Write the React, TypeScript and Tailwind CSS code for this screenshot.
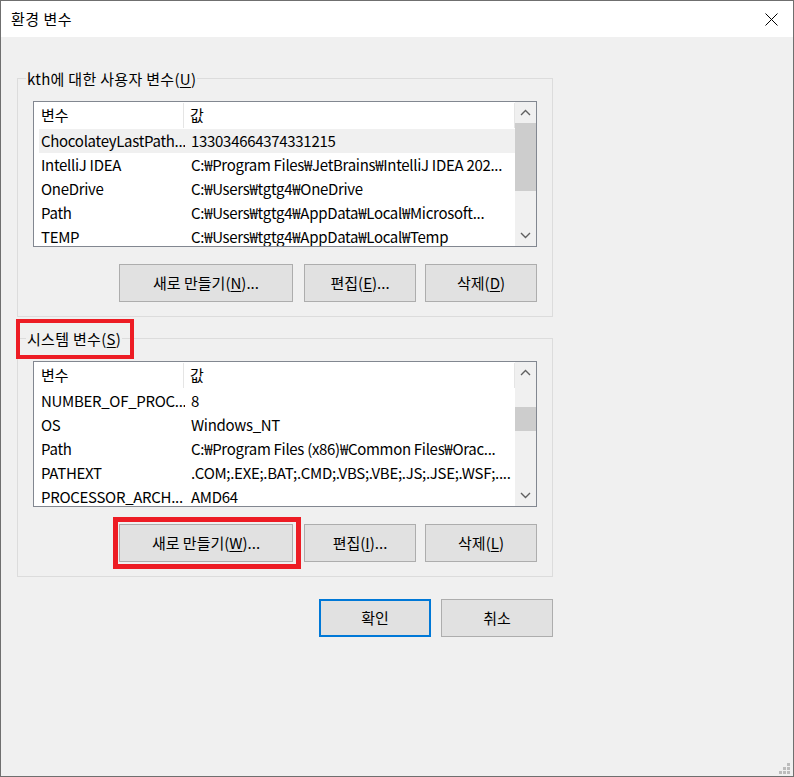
import type { ReactNode } from "react";

type Row = [string, string];

const userRows: Row[] = [
  ["ChocolateyLastPath...", "133034664374331215"],
  ["IntelliJ IDEA", "C:₩Program Files₩JetBrains₩IntelliJ IDEA 202..."],
  ["OneDrive", "C:₩Users₩tgtg4₩OneDrive"],
  ["Path", "C:₩Users₩tgtg4₩AppData₩Local₩Microsoft..."],
  ["TEMP", "C:₩Users₩tgtg4₩AppData₩Local₩Temp"],
];

const systemRows: Row[] = [
  ["NUMBER_OF_PROC...", "8"],
  ["OS", "Windows_NT"],
  ["Path", "C:₩Program Files (x86)₩Common Files₩Orac..."],
  ["PATHEXT", ".COM;.EXE;.BAT;.CMD;.VBS;.VBE;.JS;.JSE;.WSF;...."],
  ["PROCESSOR_ARCH...", "AMD64"],
];

function Key({ text, k, tail = "" }: { text: string; k: string; tail?: string }) {
  return (
    <>
      {text}(<u className="underline-offset-2">{k}</u>){tail}
    </>
  );
}

function Btn({
  children,
  className,
  marked,
  focused,
}: {
  children: ReactNode;
  className: string;
  marked?: boolean;
  focused?: boolean;
}) {
  return (
    <div
      className={
        "relative h-[38px] flex items-center justify-center bg-[#e1e1e1] text-black " +
        (focused ? "border-2 border-[#0078d7] " : "border border-[#adadad] ") +
        className
      }
    >
      {children}
      {marked && <div className="absolute -left-[7px] -top-[8px] w-[188px] h-[52px] border-[5px] border-[#ed1c24]" />}
    </div>
  );
}

function Chevron({ up }: { up?: boolean }) {
  return (
    <svg width="11" height="7" viewBox="0 0 11 7" className="block">
      <path
        d={up ? "M1 6 L5.5 1.5 L10 6" : "M1 1 L5.5 5.5 L10 1"}
        fill="none"
        stroke="#606060"
        strokeWidth="1.4"
      />
    </svg>
  );
}

function VarList({ rows, selected, thumb }: { rows: Row[]; selected?: number; thumb: string }) {
  return (
    <div className="ml-[15px] mt-[12px] w-[504px] h-[146px] border border-[#828790] bg-white flex">
      <div className="flex-1 flex flex-col overflow-hidden">
        {/* header */}
        <div className="h-[27px] shrink-0 flex items-center">
          <div className="w-[150px] h-[25px] pl-[7px] flex items-center border-r border-[#e5e5e5]">변수</div>
          <div className="flex-1 h-[25px] pl-[6px] flex items-center border-r border-[#e5e5e5]">값</div>
        </div>
        {rows.map((r, i) => (
          <div
            key={i}
            className={
              "h-[24px] shrink-0 ml-[5px] flex items-center whitespace-nowrap tracking-[-0.3px] " +
              (i === selected ? "bg-[#f0f0f0]" : "")
            }
          >
            <div className="w-[146px] pl-[2px] overflow-hidden">{r[0]}</div>
            <div className="flex-1 pl-[6px] pr-[4px] overflow-hidden">{r[1]}</div>
          </div>
        ))}
      </div>
      <div className="w-[21px] bg-[#f0f0f0] flex flex-col">
        <div className="h-[21px] flex items-center justify-center">
          <Chevron up />
        </div>
        <div className="flex-1">
          <div className={"w-full bg-[#cdcdcd] " + thumb} />
        </div>
        <div className="h-[21px] flex items-center justify-center">
          <Chevron />
        </div>
      </div>
    </div>
  );
}

function Group({
  label,
  marked,
  rows,
  selected,
  thumb,
  buttons,
  className,
}: {
  label: ReactNode;
  marked?: boolean;
  rows: Row[];
  selected?: number;
  thumb: string;
  buttons: ReactNode;
  className: string;
}) {
  return (
    <div className={"w-[536px] border border-[#dcdcdc] flex flex-col " + className}>
      <div className="relative -mt-[10px] ml-[8px] h-[20px] leading-[20px] w-fit px-[1px] bg-[#f0f0f0] whitespace-nowrap tracking-[0.3px]">
        {label}
        {marked && <div className="absolute -left-[10px] -top-[10px] w-[118px] h-[40px] border-4 border-[#ed1c24]" />}
      </div>
      <VarList rows={rows} selected={selected} thumb={thumb} />
      <div className="mt-[17px] mb-[14px] mr-[15px] flex justify-end">{buttons}</div>
    </div>
  );
}

export default function App() {
  return (
    <div className="w-[794px] h-[777px] border border-[#6f6f6f] flex flex-col text-[15px] text-black font-['Noto_Sans_CJK_KR','Noto_Sans',sans-serif]">
      {/* title bar */}
      <div className="h-[36px] shrink-0 bg-white flex items-center justify-between pl-[10px]">
        <span className="tracking-[0.5px]">환경 변수</span>
        <svg width="13" height="13" viewBox="0 0 13 13" className="mr-[15px]">
          <path d="M0.5 0.5 L12.5 12.5 M12.5 0.5 L0.5 12.5" stroke="#000" strokeWidth="1" />
        </svg>
      </div>

      <div className="flex-1 bg-[#f0f0f0] flex flex-col pl-[16px]">
        <Group
          className="mt-[41px]"
          label={<Key text="kth에 대한 사용자 변수" k="U" />}
          rows={userRows}
          selected={0}
          thumb="h-[68px]"
          buttons={
            <>
              <Btn className="w-[174px]">
                <Key text="새로 만들기" k="N" tail="..." />
              </Btn>
              <Btn className="w-[112px] ml-[11px]">
                <Key text="편집" k="E" tail="..." />
              </Btn>
              <Btn className="w-[112px] ml-[9px]">
                <Key text="삭제" k="D" />
              </Btn>
            </>
          }
        />

        <Group
          className="mt-[21px]"
          marked
          label={<Key text="시스템 변수" k="S" />}
          rows={systemRows}
          thumb="mt-[24px] h-[24px]"
          buttons={
            <>
              <Btn className="w-[174px]" marked>
                <Key text="새로 만들기" k="W" tail="..." />
              </Btn>
              <Btn className="w-[112px] ml-[11px]">
                <Key text="편집" k="I" tail="..." />
              </Btn>
              <Btn className="w-[112px] ml-[9px]">
                <Key text="삭제" k="L" />
              </Btn>
            </>
          }
        />

        <div className="w-[536px] mt-[22px] flex justify-end">
          <Btn className="w-[112px]" focused>
            확인
          </Btn>
          <Btn className="w-[112px] ml-[10px]">취소</Btn>
        </div>

        {/* size grip */}
        <svg width="11" height="11" viewBox="0 0 11 11" className="mt-auto self-end mr-[3px] mb-[2px]">
          <rect x="8" y="0" width="3" height="3" fill="#bcbcbc" />
          <rect x="4" y="4" width="3" height="3" fill="#bcbcbc" />
          <rect x="8" y="4" width="3" height="3" fill="#bcbcbc" />
          <rect x="0" y="8" width="3" height="3" fill="#bcbcbc" />
          <rect x="4" y="8" width="3" height="3" fill="#bcbcbc" />
          <rect x="8" y="8" width="3" height="3" fill="#bcbcbc" />
        </svg>
      </div>
    </div>
  );
}
